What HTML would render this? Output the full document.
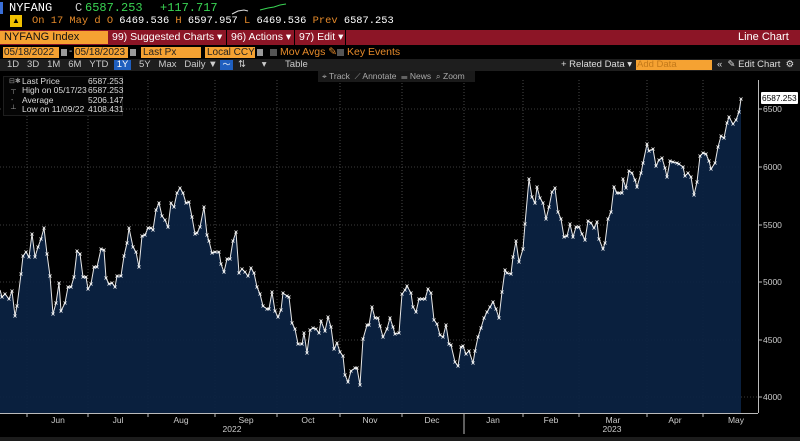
<!DOCTYPE html>
<html><head><meta charset="utf-8"><style>
*{margin:0;padding:0;box-sizing:border-box}
body{width:800px;height:441px;background:#000;overflow:hidden;position:relative;font-family:"Liberation Sans",sans-serif;color:#ddd}
.a{position:absolute;white-space:nowrap}
.m{font-family:"Liberation Mono",monospace}
</style></head><body>
<!-- row1 -->
<div class="a" style="left:0;top:2px;width:3px;height:12px;background:#3a6fd8"></div>
<div class="a m" style="left:9px;top:1px;font-size:12px;color:#fff">NYFANG</div>
<div class="a m" style="left:75px;top:1px;font-size:12px;color:#ccc">C</div>
<div class="a m" style="left:85px;top:1px;font-size:12px;color:#39d353">6587.253</div>
<div class="a m" style="left:160px;top:1px;font-size:12px;color:#39d353">+117.717</div>
<svg class="a" style="left:230px;top:2px" width="60" height="14"><path d="M2 12 L8 9 L14 8 L18 9" stroke="#ddd" fill="none" stroke-width="1"/><path d="M30 8 L38 6 L44 5 L50 3 L56 2" stroke="#39d353" fill="none" stroke-width="1"/></svg>
<!-- row2 -->
<div class="a" style="left:10px;top:15px;width:12px;height:12px;background:#f2c200;color:#000;font-size:8px;text-align:center;line-height:12px">▲</div>
<div class="a m" style="left:32px;top:15px;font-size:10.4px;color:#e58a2a">On 17 May d O <span style="color:#fff">6469.536</span> H <span style="color:#fff">6597.957</span> L <span style="color:#fff">6469.536</span> Prev <span style="color:#fff">6587.253</span></div>
<!-- row3 red bar -->
<div class="a" style="left:0;top:30px;width:800px;height:15px;background:#8c1526"></div>
<div class="a" style="left:0;top:31px;width:108px;height:13px;background:#f5a232;color:#111;font-size:11px;line-height:13px;padding-left:4px">NYFANG Index</div>
<div class="a" style="left:112px;top:30px;font-size:10.5px;line-height:15px;color:#fff">99) Suggested Charts ▾</div>
<div class="a" style="left:226px;top:30px;width:1px;height:15px;background:#000"></div>
<div class="a" style="left:231px;top:30px;font-size:10.5px;line-height:15px;color:#fff">96) Actions ▾</div>
<div class="a" style="left:294px;top:30px;width:1px;height:15px;background:#000"></div>
<div class="a" style="left:299px;top:30px;font-size:10.5px;line-height:15px;color:#fff">97) Edit ▾</div>
<div class="a" style="left:345px;top:30px;width:1px;height:15px;background:#000"></div>
<div class="a" style="left:738px;top:30px;font-size:11px;line-height:15px;color:#fff">Line Chart</div>
<!-- row4 -->
<div class="a" style="left:3px;top:47px;width:56px;height:11px;background:#f5a232;color:#222;font-size:10px;line-height:11px;padding-left:1px">05/18/2022</div>
<div class="a" style="left:61px;top:49px;width:6px;height:7px;background:#999"></div>
<div class="a" style="left:69px;top:46px;font-size:10px;color:#ccc">-</div>
<div class="a" style="left:74px;top:47px;width:54px;height:11px;background:#f5a232;color:#222;font-size:10px;line-height:11px;padding-left:1px">05/18/2023</div>
<div class="a" style="left:130px;top:49px;width:6px;height:7px;background:#999"></div>
<div class="a" style="left:141px;top:47px;width:60px;height:11px;background:#f5a232;color:#222;font-size:10px;line-height:11px;padding-left:2px">Last Px</div>
<div class="a" style="left:205px;top:47px;width:50px;height:11px;background:#f5a232;color:#222;font-size:10px;line-height:11px;padding-left:2px">Local CCY</div>
<div class="a" style="left:257px;top:49px;width:6px;height:7px;background:#999"></div>
<div class="a" style="left:270px;top:49px;width:7px;height:7px;background:#555"></div>
<div class="a" style="left:280px;top:46px;font-size:10.5px;color:#e58a2a">Mov Avgs ✎</div>
<div class="a" style="left:337px;top:49px;width:7px;height:7px;background:#555"></div>
<div class="a" style="left:347px;top:46px;font-size:10.5px;color:#e58a2a">Key Events</div>
<!-- row5 -->
<div class="a" style="left:0;top:59px;width:800px;height:12px;background:#1e1e1e"></div>
<div class="a" style="left:7px;top:59px;font-size:9.5px;line-height:12px;color:#ccc">1D&nbsp;&nbsp;&nbsp;3D&nbsp;&nbsp;&nbsp;1M&nbsp;&nbsp;&nbsp;6M&nbsp;&nbsp;&nbsp;YTD</div>
<div class="a" style="left:114px;top:60px;width:17px;height:10px;background:#1f5fbf;color:#fff;font-size:9.5px;line-height:10px;text-align:center">1Y</div>
<div class="a" style="left:139px;top:59px;font-size:9.5px;line-height:12px;color:#ccc">5Y&nbsp;&nbsp;&nbsp;Max&nbsp;&nbsp;&nbsp;Daily ▼</div>
<div class="a" style="left:220px;top:60px;width:13px;height:10px;background:#1f5fbf;color:#fff;font-size:8px;line-height:10px;text-align:center">〜</div>
<div class="a" style="left:238px;top:59px;font-size:9.5px;line-height:12px;color:#ccc">⇅&nbsp;&nbsp;&nbsp;&nbsp;&nbsp;&nbsp;▾&nbsp;&nbsp;&nbsp;&nbsp;&nbsp;&nbsp;&nbsp;Table</div>
<div class="a" style="left:561px;top:59px;font-size:9.5px;line-height:12px;color:#ddd">+ Related Data ▾</div>
<div class="a" style="left:636px;top:60px;width:76px;height:10px;background:#f5a232;color:#c47a1a;font-size:9.5px;line-height:10px;padding-left:1px">Add Data</div>
<div class="a" style="left:717px;top:59px;font-size:9.5px;line-height:12px;color:#ddd">«&nbsp;&nbsp;✎ Edit Chart&nbsp;&nbsp;⚙</div>
<!-- chart -->
<svg class="a" style="left:0;top:0" width="800" height="441">
<defs><marker id="mk" markerWidth="4" markerHeight="4" refX="2" refY="2" markerUnits="userSpaceOnUse"><path d="M0.5 0.5 L3.5 3.5 M3.5 0.5 L0.5 3.5" stroke="#fff" stroke-width="0.8"/></marker></defs>
<g stroke="#777" stroke-width="0.6" stroke-dasharray="1,2">
<line x1="0" y1="109" x2="741" y2="109"/><line x1="0" y1="167" x2="741" y2="167"/><line x1="0" y1="225" x2="741" y2="225"/><line x1="0" y1="282" x2="741" y2="282"/><line x1="0" y1="340" x2="741" y2="340"/><line x1="0" y1="397" x2="758" y2="397"/>
<line x1="27" y1="80" x2="27" y2="413"/><line x1="88" y1="80" x2="88" y2="413"/><line x1="148" y1="80" x2="148" y2="413"/><line x1="215" y1="80" x2="215" y2="413"/><line x1="277" y1="80" x2="277" y2="413"/><line x1="340" y1="80" x2="340" y2="413"/><line x1="402" y1="80" x2="402" y2="413"/><line x1="464" y1="80" x2="464" y2="413"/><line x1="523" y1="80" x2="523" y2="413"/><line x1="579" y1="80" x2="579" y2="413"/><line x1="647" y1="80" x2="647" y2="413"/><line x1="703" y1="80" x2="703" y2="413"/>
</g>
<polygon fill="#0b2241" fill-opacity="0.95" points="0,413 0,290 2,297 5,294 9,299 12,291 15,316 17,306 21,274 23,256 26,252 29,257 32,234 35,257 38,247 41,239 44,228 47,254 50,276 53,314 56,303 59,283 61,311 65,303 68,287 71,287 74,277 77,251 80,254 83,277 86,277 88,289 91,284 94,267 97,267 101,249 104,250 106,278 109,284 112,283 115,287 117,276 121,276 124,256 127,243 129,228 133,247 136,252 139,267 142,236 145,235 148,228 151,228 153,230 156,210 159,203 162,216 165,220 168,227 171,203 174,207 177,193 180,188 183,193 186,203 189,202 192,217 195,234 197,233 200,227 204,207 207,235 209,241 212,253 215,252 219,252 221,264 224,272 227,259 230,259 233,241 236,232 239,273 242,269 245,272 248,276 251,268 254,273 257,287 260,294 263,306 267,309 269,309 272,292 275,311 278,317 281,310 283,293 287,296 289,297 292,323 295,329 298,344 302,344 304,333 307,353 310,330 313,328 316,329 319,333 321,321 325,331 328,317 331,327 334,349 337,343 340,352 343,356 345,375 348,382 351,371 355,368 357,368 360,385 363,339 367,325 369,325 372,307 375,318 378,318 380,326 383,337 387,329 390,318 393,327 395,334 399,333 402,294 405,290 407,286 411,293 413,307 416,312 419,299 422,299 425,299 428,289 431,293 434,320 437,324 440,335 443,337 446,325 449,344 451,345 455,362 458,366 461,347 463,346 466,354 469,351 473,363 475,351 478,337 481,328 484,318 487,312 490,307 493,302 496,309 499,318 502,292 505,270 507,273 511,274 513,257 516,241 519,262 523,249 525,224 529,179 532,197 535,203 537,187 540,198 543,203 546,219 549,207 552,192 555,188 558,212 561,219 564,237 567,236 570,224 573,237 576,227 579,227 582,234 585,240 588,221 591,223 594,228 597,222 599,239 603,249 605,243 608,219 611,212 614,187 617,193 619,193 622,193 623,179 626,188 629,171 632,173 635,180 637,187 641,173 643,163 647,144 649,151 653,149 656,166 659,160 662,158 665,168 667,177 670,161 673,162 677,163 679,164 683,167 685,176 688,173 691,177 694,195 697,182 700,156 703,153 706,154 709,161 711,169 715,163 718,147 721,136 724,138 727,123 729,117 733,124 736,120 739,112 741,99 741,413"/>
<polyline fill="none" stroke="#e8e8e8" stroke-width="1" marker-mid="url(#mk)" marker-end="url(#mk)" points="0,290 2,297 5,294 9,299 12,291 15,316 17,306 21,274 23,256 26,252 29,257 32,234 35,257 38,247 41,239 44,228 47,254 50,276 53,314 56,303 59,283 61,311 65,303 68,287 71,287 74,277 77,251 80,254 83,277 86,277 88,289 91,284 94,267 97,267 101,249 104,250 106,278 109,284 112,283 115,287 117,276 121,276 124,256 127,243 129,228 133,247 136,252 139,267 142,236 145,235 148,228 151,228 153,230 156,210 159,203 162,216 165,220 168,227 171,203 174,207 177,193 180,188 183,193 186,203 189,202 192,217 195,234 197,233 200,227 204,207 207,235 209,241 212,253 215,252 219,252 221,264 224,272 227,259 230,259 233,241 236,232 239,273 242,269 245,272 248,276 251,268 254,273 257,287 260,294 263,306 267,309 269,309 272,292 275,311 278,317 281,310 283,293 287,296 289,297 292,323 295,329 298,344 302,344 304,333 307,353 310,330 313,328 316,329 319,333 321,321 325,331 328,317 331,327 334,349 337,343 340,352 343,356 345,375 348,382 351,371 355,368 357,368 360,385 363,339 367,325 369,325 372,307 375,318 378,318 380,326 383,337 387,329 390,318 393,327 395,334 399,333 402,294 405,290 407,286 411,293 413,307 416,312 419,299 422,299 425,299 428,289 431,293 434,320 437,324 440,335 443,337 446,325 449,344 451,345 455,362 458,366 461,347 463,346 466,354 469,351 473,363 475,351 478,337 481,328 484,318 487,312 490,307 493,302 496,309 499,318 502,292 505,270 507,273 511,274 513,257 516,241 519,262 523,249 525,224 529,179 532,197 535,203 537,187 540,198 543,203 546,219 549,207 552,192 555,188 558,212 561,219 564,237 567,236 570,224 573,237 576,227 579,227 582,234 585,240 588,221 591,223 594,228 597,222 599,239 603,249 605,243 608,219 611,212 614,187 617,193 619,193 622,193 623,179 626,188 629,171 632,173 635,180 637,187 641,173 643,163 647,144 649,151 653,149 656,166 659,160 662,158 665,168 667,177 670,161 673,162 677,163 679,164 683,167 685,176 688,173 691,177 694,195 697,182 700,156 703,153 706,154 709,161 711,169 715,163 718,147 721,136 724,138 727,123 729,117 733,124 736,120 739,112 741,99"/>
<line x1="0" y1="413.5" x2="758" y2="413.5" stroke="#bbb" stroke-width="1"/>
<line x1="758.5" y1="80" x2="758.5" y2="413" stroke="#bbb" stroke-width="1"/>
<g stroke="#bbb"><line x1="758" y1="109" x2="762" y2="109"/><line x1="758" y1="167" x2="762" y2="167"/><line x1="758" y1="225" x2="762" y2="225"/><line x1="758" y1="282" x2="762" y2="282"/><line x1="758" y1="340" x2="762" y2="340"/><line x1="758" y1="397" x2="762" y2="397"/>
<line x1="27" y1="413" x2="27" y2="417"/><line x1="88" y1="413" x2="88" y2="417"/><line x1="148" y1="413" x2="148" y2="417"/><line x1="215" y1="413" x2="215" y2="417"/><line x1="277" y1="413" x2="277" y2="417"/><line x1="340" y1="413" x2="340" y2="417"/><line x1="402" y1="413" x2="402" y2="417"/><line x1="464" y1="413" x2="464" y2="434"/><line x1="523" y1="413" x2="523" y2="417"/><line x1="579" y1="413" x2="579" y2="417"/><line x1="647" y1="413" x2="647" y2="417"/><line x1="703" y1="413" x2="703" y2="417"/></g>
<g font-family="Liberation Sans" font-size="8.5" fill="#ccc">
<text x="763" y="112">6500</text><text x="763" y="170">6000</text><text x="763" y="228">5500</text><text x="763" y="285">5000</text><text x="763" y="343">4500</text><text x="763" y="400">4000</text>
<g text-anchor="middle"><text x="58" y="423">Jun</text><text x="118" y="423">Jul</text><text x="181" y="423">Aug</text><text x="246" y="423">Sep</text><text x="308" y="423">Oct</text><text x="370" y="423">Nov</text><text x="432" y="423">Dec</text><text x="493" y="423">Jan</text><text x="551" y="423">Feb</text><text x="613" y="423">Mar</text><text x="675" y="423">Apr</text><text x="736" y="423">May</text>
<text x="232" y="432">2022</text><text x="612" y="432">2023</text></g>
</g>
<rect x="761" y="92" width="37" height="12" fill="#fff" rx="1"/>
<text x="762" y="101" font-family="Liberation Sans" font-size="8.3" fill="#000">6587.253</text>
</svg>
<div class="a" style="left:0;top:437px;width:800px;height:4px;background:#1c1c1c"></div>
<!-- toolbar -->
<div class="a" style="left:318px;top:71px;width:157px;height:11px;background:#1a1a1a;color:#aaa;font-size:8.5px;line-height:11px;padding-left:4px">⌖ Track&nbsp;&nbsp;⟋ Annotate&nbsp;&nbsp;☰ News&nbsp;&nbsp;⌕ Zoom</div>
<!-- legend -->
<div class="a" style="left:3px;top:76px;width:120px;height:40px;background:#050505;border:1px solid #1e1e1e"></div>
<div class="a" style="left:22px;top:77px;font-size:8.5px;line-height:9.3px;color:#ddd">Last Price<br>High on 05/17/23<br>Average<br>Low on 11/09/22</div>
<div class="a" style="left:88px;top:77px;font-size:8.5px;line-height:9.3px;color:#ddd">6587.253<br>6587.253<br>5206.147<br>4108.431</div>
<div class="a" style="left:9px;top:77px;font-size:7px;line-height:9.3px;color:#999">⊟✱<br>&nbsp;┬<br>&nbsp;-<br>&nbsp;┴</div>
</body></html>
